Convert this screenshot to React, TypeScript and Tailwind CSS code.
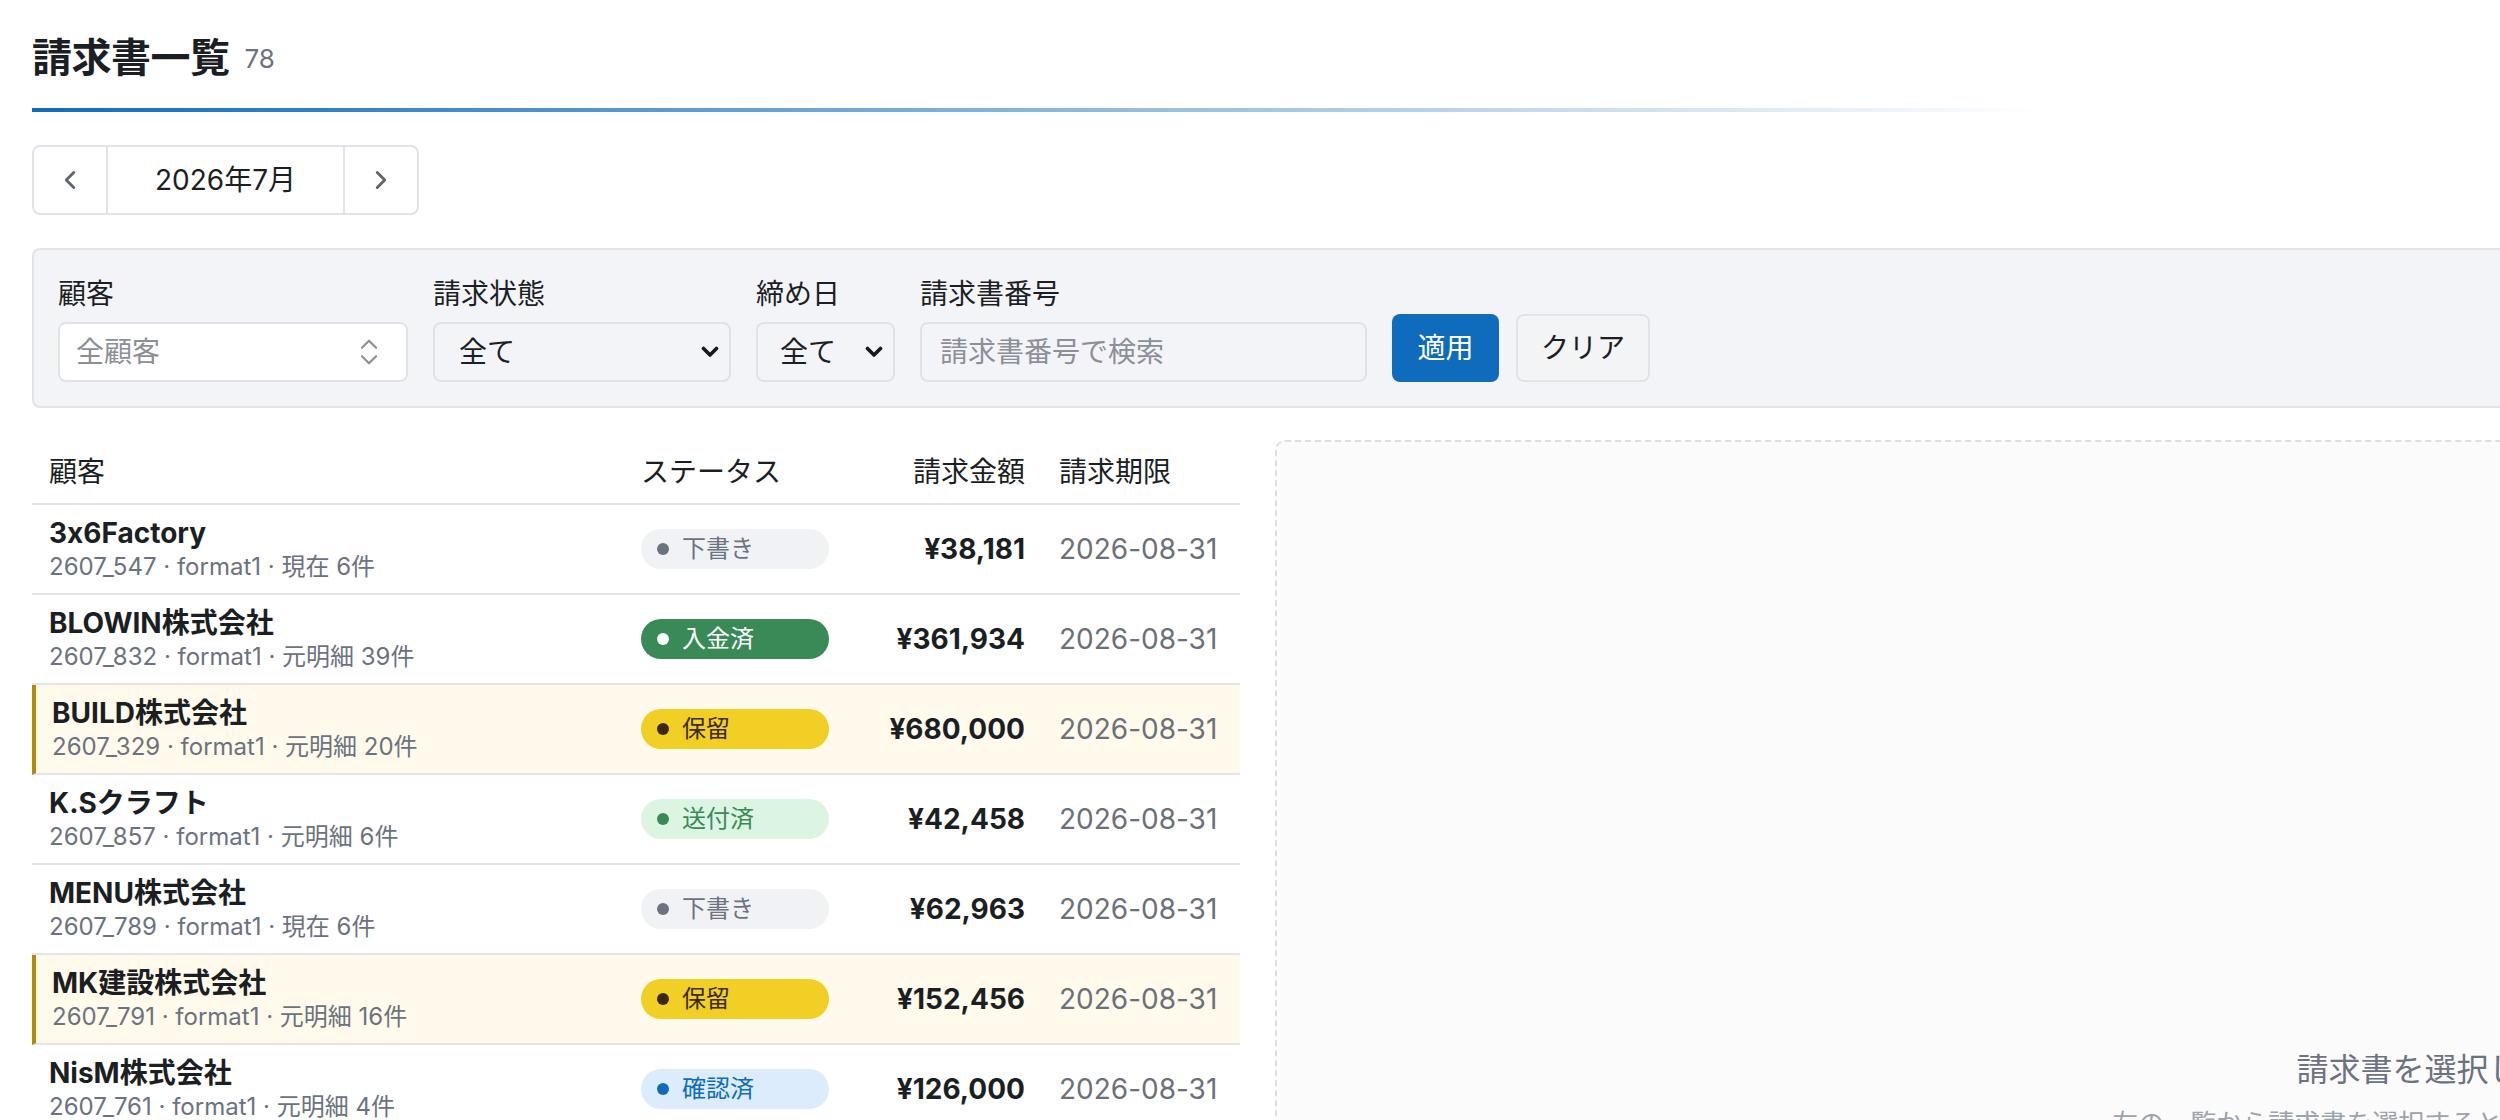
import React from "react";
import { ChevronLeft, ChevronRight, ChevronsUpDown } from "lucide-react";

type Status = "draft" | "paid" | "hold" | "sent" | "confirmed";

const rows: {
  name: string;
  sub: string;
  status: Status;
  amount: string;
  hl?: boolean;
}[] = [
  { name: "3x6Factory", sub: "2607_547 · format1 · 現在 6件", status: "draft", amount: "¥38,181" },
  { name: "BLOWIN株式会社", sub: "2607_832 · format1 · 元明細 39件", status: "paid", amount: "¥361,934" },
  { name: "BUILD株式会社", sub: "2607_329 · format1 · 元明細 20件", status: "hold", amount: "¥680,000", hl: true },
  { name: "K.Sクラフト", sub: "2607_857 · format1 · 元明細 6件", status: "sent", amount: "¥42,458" },
  { name: "MENU株式会社", sub: "2607_789 · format1 · 現在 6件", status: "draft", amount: "¥62,963" },
  { name: "MK建設株式会社", sub: "2607_791 · format1 · 元明細 16件", status: "hold", amount: "¥152,456", hl: true },
  { name: "NisM株式会社", sub: "2607_761 · format1 · 元明細 4件", status: "confirmed", amount: "¥126,000" },
];

function Badge({ s }: { s: Status }) {
  if (s === "draft")
    return (
      <span className="flex h-[40px] w-[188px] items-center gap-[13px] rounded-full bg-[#f1f2f6] pl-[16px] text-[24px] text-[#6b7280]">
        <span className="h-[12px] w-[12px] rounded-full bg-[#6b7280]" />
        下書き
      </span>
    );
  if (s === "paid")
    return (
      <span className="flex h-[40px] w-[188px] items-center gap-[13px] rounded-full bg-[#3a8a58] pl-[16px] text-[24px] text-white">
        <span className="h-[12px] w-[12px] rounded-full bg-white" />
        入金済
      </span>
    );
  if (s === "hold")
    return (
      <span className="flex h-[40px] w-[188px] items-center gap-[13px] rounded-full bg-[#f2cf25] pl-[16px] text-[24px] text-[#3b2a05]">
        <span className="h-[12px] w-[12px] rounded-full bg-[#3b2a05]" />
        保留
      </span>
    );
  if (s === "sent")
    return (
      <span className="flex h-[40px] w-[188px] items-center gap-[13px] rounded-full bg-[#dcf5e3] pl-[16px] text-[24px] text-[#3a8a58]">
        <span className="h-[12px] w-[12px] rounded-full bg-[#3a8a58]" />
        送付済
      </span>
    );
  return (
    <span className="flex h-[40px] w-[188px] items-center gap-[13px] rounded-full bg-[#dcecfc] pl-[16px] text-[24px] text-[#0f6cbd]">
      <span className="h-[12px] w-[12px] rounded-full bg-[#0f6cbd]" />
      確認済
    </span>
  );
}

function SelectChevron() {
  return (
    <svg width="18" height="12" viewBox="0 0 18 12" fill="none">
      <polyline points="2.5,2.5 9,9 15.5,2.5" stroke="#16191d" strokeWidth="3.6" strokeLinecap="round" strokeLinejoin="round" />
    </svg>
  );
}

export default function App() {
  return (
    <div className="h-[1120px] w-[2500px] overflow-hidden bg-white font-['Inter','Noto_Sans_CJK_JP',sans-serif] text-[#1b1f23] [font-feature-settings:'calt'_0]">
      <div className="w-[3732px] px-[32px] pt-[32px]">
        {/* Title */}
        <div className="flex h-[52px] items-center gap-[15px]">
          <h1 className="text-[40px] font-bold leading-[52px] tracking-[-0.5px]">請求書一覧</h1>
          <span className="text-[26px] text-[#6b7280]">78</span>
        </div>
        <div className="mt-[24px] h-[4px] w-[2010px] bg-[linear-gradient(to_right,#0f6cbd,rgba(15,108,189,0))]" />

        {/* Month switcher */}
        <div className="mt-[33px] flex h-[70px] w-[387px] overflow-hidden rounded-[8px] border-2 border-[#e2e3e8] bg-white">
          <div className="flex w-[74px] items-center justify-center border-r-2 border-[#e2e3e8] text-[#5f6670]">
            <ChevronLeft size={30} strokeWidth={2.3} />
          </div>
          <div className="flex flex-1 items-center justify-center text-[28px] text-[#1b1f23]">2026年7月</div>
          <div className="flex w-[74px] items-center justify-center border-l-2 border-[#e2e3e8] text-[#5f6670]">
            <ChevronRight size={30} strokeWidth={2.3} />
          </div>
        </div>

        {/* Filters */}
        <div className="mt-[33px] flex items-end gap-[25px] rounded-[8px] border-2 border-[#e3e4e9] bg-[#f3f4f8] px-[24px] py-[24px]">
          <div className="flex w-[350px] flex-col gap-[8px]">
            <label className="text-[28px] leading-[40px]">顧客</label>
            <div className="flex h-[60px] items-center justify-between rounded-[8px] border-2 border-[#e2e3e8] bg-white pl-[16px] pr-[20px]">
              <span className="text-[28px] text-[#8a8f98]">全顧客</span>
              <ChevronsUpDown size={34} strokeWidth={1.5} className="text-[#8a8f98]" />
            </div>
          </div>
          <div className="flex w-[298px] flex-col gap-[8px]">
            <label className="text-[28px] leading-[40px]">請求状態</label>
            <div className="flex h-[60px] items-center justify-between rounded-[8px] border-2 border-[#e1e2e7] bg-[#f3f4f8] pl-[24px] pr-[10px]">
              <span className="text-[28px]">全て</span>
              <SelectChevron />
            </div>
          </div>
          <div className="flex w-[139px] flex-col gap-[8px]">
            <label className="text-[28px] leading-[40px]">締め日</label>
            <div className="flex h-[60px] items-center justify-between rounded-[8px] border-2 border-[#e1e2e7] bg-[#f3f4f8] pl-[22px] pr-[10px]">
              <span className="text-[28px]">全て</span>
              <SelectChevron />
            </div>
          </div>
          <div className="flex w-[447px] flex-col gap-[8px]">
            <label className="text-[28px] leading-[40px]">請求書番号</label>
            <div className="flex h-[60px] items-center rounded-[8px] border-2 border-[#e1e2e7] bg-[#f3f4f8] pl-[18px]">
              <span className="text-[28px] text-[#8a8f98]">請求書番号で検索</span>
            </div>
          </div>
          <div className="flex gap-[17px]">
            <button className="flex h-[68px] w-[107px] items-center justify-center rounded-[8px] bg-[#0f6cbd] text-[28px] text-white">適用</button>
            <button className="flex h-[68px] w-[134px] items-center justify-center rounded-[8px] border-2 border-[#e2e3e8] bg-[#f3f4f6] text-[28px] text-[#1b1f23]">クリア</button>
          </div>
        </div>

        {/* Content */}
        <div className="mt-[32px] flex gap-[35px]">
          <div className="w-[1208px] shrink-0">
            <div className="grid h-[65px] grid-cols-[592px_245px_173px_198px] items-center border-b-2 border-[#e3e4e8] text-[28px]">
              <div className="px-[17px]">顧客</div>
              <div className="px-[17px]">ステータス</div>
              <div className="px-[17px] text-right">請求金額</div>
              <div className="px-[17px]">請求期限</div>
            </div>
            {rows.map((r) => (
              <div
                key={r.sub}
                className={
                  r.hl
                    ? "grid grid-cols-[588px_245px_173px_198px] items-center border-b-2 border-l-4 border-b-[#e3e4e8] border-l-[#b8860b] bg-[#fffaeb] py-[10px]"
                    : "grid grid-cols-[592px_245px_173px_198px] items-center border-b-2 border-[#e3e4e8] py-[10px]"
                }
              >
                <div className={r.hl ? "pl-[16px] pr-[17px]" : "px-[17px]"}>
                  <div className="text-[28px] font-bold leading-[36px]">{r.name}</div>
                  <div className="text-[24px] leading-[32px] text-[#6b7280]">{r.sub}</div>
                </div>
                <div className="px-[17px]">
                  <Badge s={r.status} />
                </div>
                <div className="px-[17px] text-right text-[28px] font-bold">{r.amount}</div>
                <div className="px-[17px] text-[28px] text-[#6b7079]">2026-08-31</div>
              </div>
            ))}
          </div>
          <div className="flex h-[1308px] flex-1 flex-col items-center justify-center rounded-[10px] border-2 border-dashed border-[#dcdee2] bg-[#fbfbfc]">
            <div className="text-[32px] leading-[48px] text-[#6b7280]">請求書を選択してください</div>
            <div className="mt-[12px] text-[26px] leading-[36px] text-[#9ca3af]">左の一覧から請求書を選択すると、ここに詳細が表示されます。</div>
          </div>
        </div>
      </div>
    </div>
  );
}
